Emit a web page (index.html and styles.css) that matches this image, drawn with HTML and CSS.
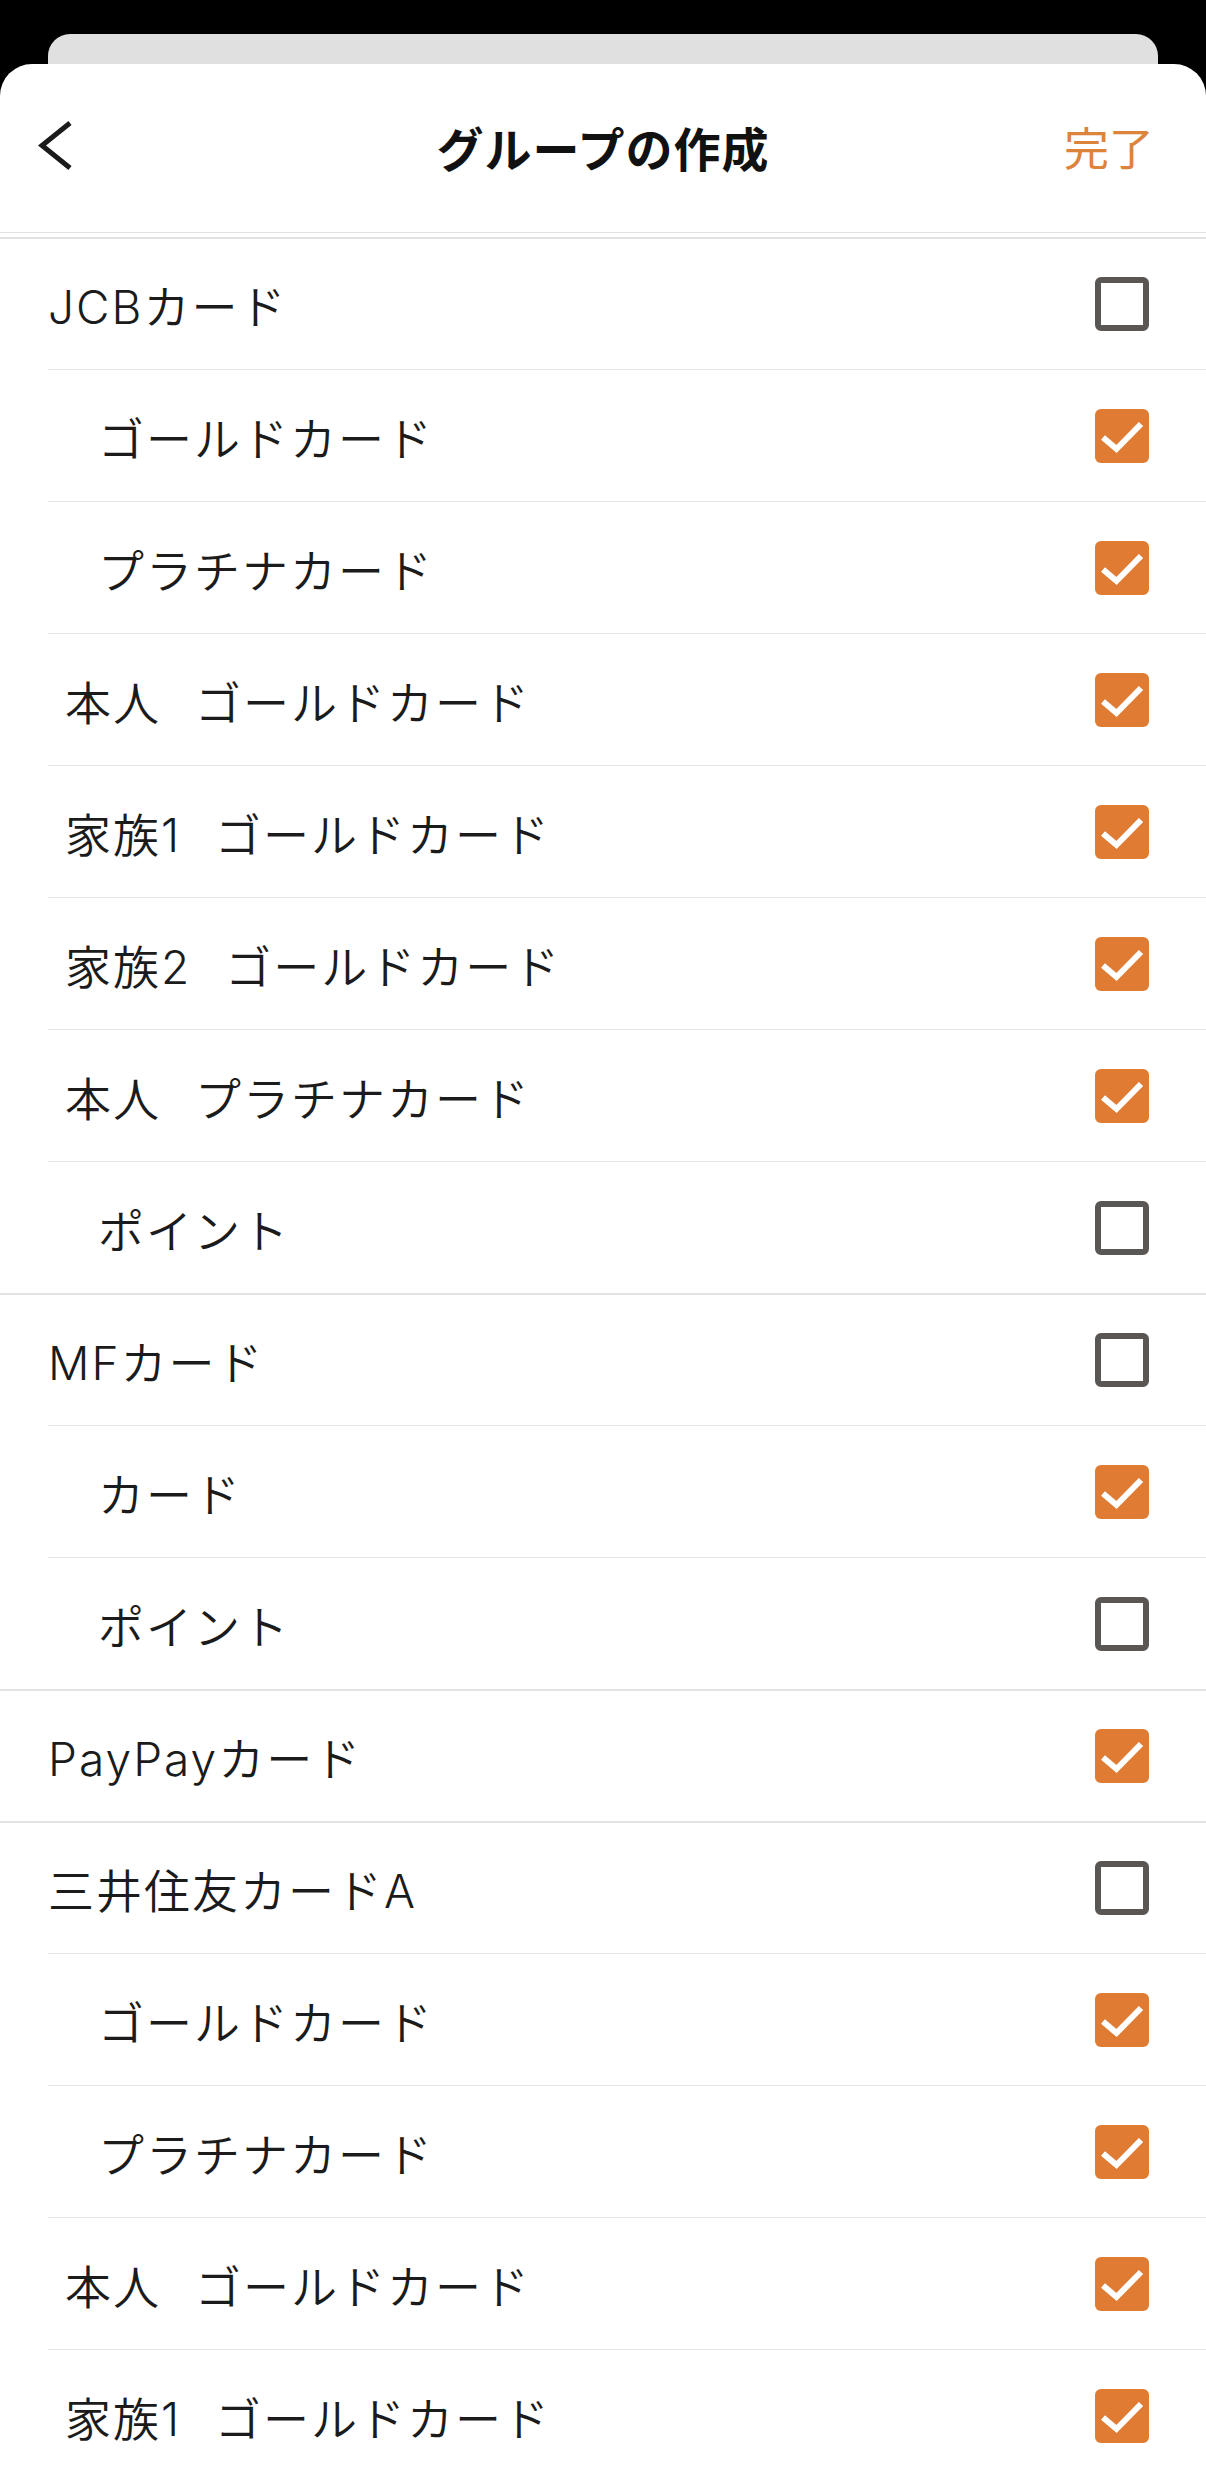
FILE: index.html
```html
<!DOCTYPE html>
<html lang="ja">
<head>
  <meta charset="UTF-8">
  <meta name="viewport" content="width=device-width, initial-scale=1.0">
  <title>グループの作成</title>
  <link rel="stylesheet" href="styles.css">
</head>
<body>
  <div class="screen">
    <div class="sheet-behind"></div>

    <div class="sheet">
      <header class="nav">
        <button class="nav-back" aria-label="戻る">
          <svg width="40" height="56" viewBox="0 0 40 56">
            <polyline points="34,3 6,25.5 34,48" fill="none" stroke="#1b1b1b" stroke-width="5" stroke-linejoin="miter"/>
          </svg>
        </button>
        <h1 class="nav-title">グループの作成</h1>
        <button class="nav-done">完了</button>
      </header>

      <div class="account-list">
        <!-- JCB -->
        <section class="group">
          <div class="row"><span class="name">JCBカード</span><span class="check"></span></div>
          <div class="row sub"><span class="name">ゴールドカード</span><span class="check on"><svg viewBox="0 0 54 54"><polyline points="8,28.5 21.5,40 46,15"/></svg></span></div>
          <div class="row sub"><span class="name">プラチナカード</span><span class="check on"><svg viewBox="0 0 54 54"><polyline points="8,28.5 21.5,40 46,15"/></svg></span></div>
          <div class="row member"><span class="name"><span class="owner">本人</span>ゴールドカード</span><span class="check on"><svg viewBox="0 0 54 54"><polyline points="8,28.5 21.5,40 46,15"/></svg></span></div>
          <div class="row member"><span class="name"><span class="owner">家族1</span>ゴールドカード</span><span class="check on"><svg viewBox="0 0 54 54"><polyline points="8,28.5 21.5,40 46,15"/></svg></span></div>
          <div class="row member"><span class="name"><span class="owner">家族2</span>ゴールドカード</span><span class="check on"><svg viewBox="0 0 54 54"><polyline points="8,28.5 21.5,40 46,15"/></svg></span></div>
          <div class="row member"><span class="name"><span class="owner">本人</span>プラチナカード</span><span class="check on"><svg viewBox="0 0 54 54"><polyline points="8,28.5 21.5,40 46,15"/></svg></span></div>
          <div class="row sub"><span class="name">ポイント</span><span class="check"></span></div>
        </section>

        <!-- MF -->
        <section class="group">
          <div class="row"><span class="name">MFカード</span><span class="check"></span></div>
          <div class="row sub"><span class="name">カード</span><span class="check on"><svg viewBox="0 0 54 54"><polyline points="8,28.5 21.5,40 46,15"/></svg></span></div>
          <div class="row sub"><span class="name">ポイント</span><span class="check"></span></div>
        </section>

        <!-- PayPay -->
        <section class="group">
          <div class="row"><span class="name">PayPayカード</span><span class="check on"><svg viewBox="0 0 54 54"><polyline points="8,28.5 21.5,40 46,15"/></svg></span></div>
        </section>

        <!-- 三井住友 -->
        <section class="group">
          <div class="row"><span class="name">三井住友カードA</span><span class="check"></span></div>
          <div class="row sub"><span class="name">ゴールドカード</span><span class="check on"><svg viewBox="0 0 54 54"><polyline points="8,28.5 21.5,40 46,15"/></svg></span></div>
          <div class="row sub"><span class="name">プラチナカード</span><span class="check on"><svg viewBox="0 0 54 54"><polyline points="8,28.5 21.5,40 46,15"/></svg></span></div>
          <div class="row member"><span class="name"><span class="owner">本人</span>ゴールドカード</span><span class="check on"><svg viewBox="0 0 54 54"><polyline points="8,28.5 21.5,40 46,15"/></svg></span></div>
          <div class="row member"><span class="name"><span class="owner">家族1</span>ゴールドカード</span><span class="check on"><svg viewBox="0 0 54 54"><polyline points="8,28.5 21.5,40 46,15"/></svg></span></div>
        </section>
      </div>
    </div>
  </div>
</body>
</html>
```

FILE: styles.css
```css
body, html {
  margin: 0;
  padding: 0;
  background-color: #000;
  font-family: Inter, "Noto Sans CJK JP", sans-serif;
  color: #1b1b1b;
}

.screen {
  width: 1206px;
  height: 2470px;
  padding-top: 34px;
  box-sizing: border-box;
  overflow: hidden;
}

.sheet-behind {
  height: 30px;
  margin: 0 48px;
  background-color: #e0e0e0;
  border-radius: 22px 22px 0 0;
}

.sheet {
  background-color: #fff;
  border-radius: 32px 32px 0 0;
  height: 2406px;
}

.nav {
  display: grid;
  grid-template-columns: 1fr auto 1fr;
  align-items: center;
  height: 169px;
  padding: 0 52px;
  box-sizing: border-box;
  border-bottom: 1px solid #e3e3e3;
}

.nav-back {
  justify-self: start;
  padding: 0;
  margin: 0 0 0 -16px;
  border: none;
  background: none;
  display: flex;
}

.nav-title {
  margin: -4px 0 0;
  font-family: "Noto Sans CJK JP", sans-serif;
  font-size: 47px;
  font-weight: 700;
  color: #111;
  letter-spacing: 1px;
}

.nav-done {
  justify-self: end;
  padding: 0;
  margin-top: -4px;
  border: none;
  background: none;
  font-family: "Noto Sans CJK JP", sans-serif;
  font-size: 45px;
  color: #dc843c;
}

.account-list {
  padding-top: 4px;
}

.group {
  border-top: 2px solid #e2e2e2;
}

.row {
  display: flex;
  align-items: center;
  justify-content: space-between;
  height: 132px;
  margin-left: 48px;
  padding-right: 57px;
  box-sizing: border-box;
  border-top: 1px solid #e4e4e4;
}

.row:first-child {
  height: 130px;
  border-top: none;
}

.name {
  font-size: 46px;
  font-weight: 350;
  letter-spacing: 2px;
}

.row.sub .name {
  padding-left: 50px;
}

.row.member .name {
  padding-left: 17px;
}

.owner {
  margin-right: 34px;
}

.check {
  width: 54px;
  height: 54px;
  box-sizing: border-box;
  border: 6px solid #595654;
  border-radius: 6px;
  flex-shrink: 0;
}

.check.on {
  border: none;
  background-color: #e07b33;
}

.check svg {
  display: block;
  width: 54px;
  height: 54px;
}

.check polyline {
  fill: none;
  stroke: #fff;
  stroke-width: 6;
}
```
